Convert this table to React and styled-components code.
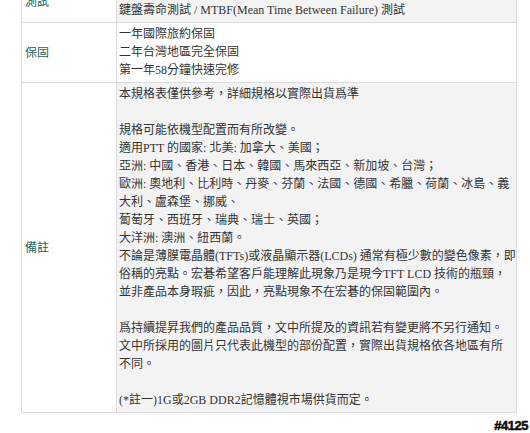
import React from "react";
import styled, { createGlobalStyle } from "styled-components";

const GlobalStyle = createGlobalStyle`
	html, body {
		margin: 0;
		padding: 0;
		background: #fff;
	}
	body {
		font-family: "Liberation Serif", "Noto Sans CJK TC", serif;
		font-size: 12px;
		color: #333;
	}
`;

const Viewport = styled.div`
	width: 530px;
	height: 433px;
	overflow: hidden;
`;

const Page = styled.div`
	margin-top: -20px;
	padding-left: 21px;
	width: 496px;
`;

const Table = styled.table`
	width: 496px;
	border-collapse: collapse;
	table-layout: fixed;
	border: 1px solid #dcdcdc;
`;

const Row = styled.tr`
	border-bottom: 1px solid #dcdcdc;
`;

const LabelCell = styled.td`
	width: 88px;
	padding: 2px 3px 3px 3px;
	background: #fff;
	color: #22625f;
	font-family: "Noto Sans CJK TC", sans-serif;
	font-size: 12px;
	line-height: 18px;
	vertical-align: middle;
	border-right: 1px solid #dcdcdc;
`;

const ValueCell = styled.td`
	padding: 2px 2px 3px 2px;
	background: ${(p) => (p.$shade ? "#f3f3f3" : "#fff")};
	line-height: 18px;
	vertical-align: top;
	white-space: nowrap;
`;

const Line = styled.div`
	min-height: 18px;
`;

const Stamp = styled.div`
	text-align: right;
	padding: 5px 2px 0 0;
	font-family: "Liberation Sans", Arial, sans-serif;
	font-weight: bold;
	font-size: 13px;
	letter-spacing: -0.5px;
	color: #1a1a1a;
	text-shadow: 1px 0 0 #fff, -1px 0 0 #fff, 0 1px 0 #fff, 0 -1px 0 #fff;
	-webkit-text-stroke: 0.5px #000;
`;

const rows = [
	{
		label: "測試",
		shade: true,
		lines: [
			"鍵盤按鍵耐久度測試 / 轉軸開闔測試",
			"鍵盤壽命測試 / MTBF(Mean Time Between Failure) 測試",
		],
	},
	{
		label: "保固",
		shade: false,
		lines: ["一年國際旅約保固", "二年台灣地區完全保固", "第一年58分鐘快速完修"],
	},
	{
		label: "備註",
		shade: true,
		lines: [
			"本規格表僅供參考，詳細規格以實際出貨爲準",
			"",
			"規格可能依機型配置而有所改變。",
			"適用PTT 的國家: 北美: 加拿大、美國；",
			"亞洲: 中國、香港、日本、韓國、馬來西亞、新加坡、台灣；",
			"歐洲: 奧地利、比利時、丹麥、芬蘭、法國、德國、希臘、荷蘭、冰島、義",
			"大利、盧森堡、挪威、",
			"蔔萄牙、西班牙、瑞典、瑞士、英國；",
			"大洋洲: 澳洲、紐西蘭。",
			"不論是薄膜電晶體(TFTs)或液晶顯示器(LCDs) 通常有極少數的變色像素，即",
			"俗稱的亮點。宏碁希望客戶能理解此現象乃是現今TFT LCD 技術的瓶頸，",
			"並非產品本身瑕疵，因此，亮點現象不在宏碁的保固範圍內。",
			"",
			"爲持續提昇我們的產品品質，文中所提及的資訊若有變更將不另行通知。",
			"文中所採用的圖片只代表此機型的部份配置，實際出貨規格依各地區有所",
			"不同。",
			"",
			"(*註一)1G或2GB DDR2記憶體視市場供貨而定。",
		],
	},
];

const App = () => {
	return (
		<Viewport>
			<GlobalStyle />
			<Page>
				<Table>
					<tbody>
						{rows.map((row) => (
							<Row key={row.label}>
								<LabelCell>{row.label}</LabelCell>
								<ValueCell $shade={row.shade}>
									{row.lines.map((line, i) => (
										<Line key={i}>{line}</Line>
									))}
								</ValueCell>
							</Row>
						))}
					</tbody>
				</Table>
			</Page>
			<Stamp>#4125</Stamp>
		</Viewport>
	);
};

export default App;
